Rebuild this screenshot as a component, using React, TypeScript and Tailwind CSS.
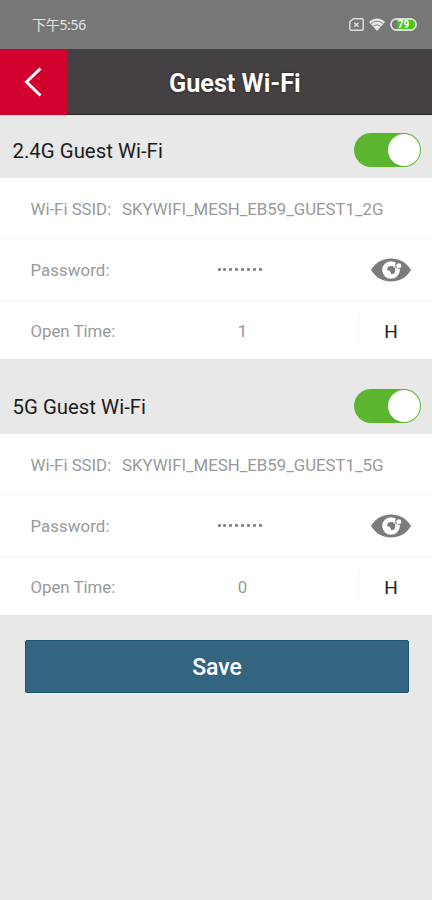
import React from "react";

function EyeIcon() {
  return (
    <svg width="40" height="24" viewBox="0 0 40 24" className="block">
      <path d="M0 12C5 4 12 .5 20 .5S35 4 40 12C35 20 28 23.500 20 23.500S5 20 0 12Z" fill="#7b7b7b" />
      <circle cx="20" cy="12" r="8.800" fill="#fff" />
      <path d="M16 12.200a4.100 4.100 0 1 1 4.100 4.100c0-2.300-1.200-4.100-4.100-4.100Z" fill="#7b7b7b" />
      <circle cx="27.500" cy="7.500" r="3.300" fill="#7b7b7b" />
      <circle cx="27.800" cy="7.700" r="2.500" fill="#fff" />
    </svg>
  );
}

function StatusBar() {
  return (
    <div className="flex h-[49px] items-center justify-between bg-[#777777] pl-8 pr-[15px] text-[#e4e4e4]">
      <span className="text-[14px] leading-none tracking-[-0.3px] [font-family:'Noto_Sans','Noto_Sans_CJK_SC',sans-serif]">下午5:56</span>
      <div className="flex items-center gap-[5px]">
        <svg width="15" height="13" viewBox="0 0 15 13" fill="none" stroke="#dedede" strokeWidth="1.500">
          <path d="M4.300.8h8.500a1.400 1.400 0 0 1 1.400 1.400v8.600a1.400 1.400 0 0 1-1.400 1.400H2.200a1.400 1.400 0 0 1-1.400-1.400V4Z" />
          <path d="m5.300 4.700 4.200 4M9.500 4.700l-4.200 4" />
        </svg>
        <svg width="16" height="13" viewBox="0 0 16 13">
          <path d="M0 4C4.500-.8 11.500-.8 16 4L8 13Z" fill="#e8e8e8" />
          <path d="M1.800 5.900c3.600-3.500 8.800-3.500 12.400 0M4.200 8.500c2.300-2.100 5.300-2.100 7.600 0" fill="none" stroke="#777" strokeWidth=".9" />
        </svg>
        <div className="flex h-[13px] w-[27px] items-center justify-center rounded-full border-2 border-[#dcdcdc]">
          <span className="flex h-full w-full items-center justify-center rounded-full bg-[linear-gradient(90deg,#777_0_20%,#46c918_20%)] text-[10px] font-bold leading-none text-white [font-family:Roboto,sans-serif]">79</span>
        </div>
      </div>
    </div>
  );
}

function Header() {
  return (
    <header className="flex h-[66px] items-center border-b border-[#252223] bg-[#454041]">
      <button className="flex h-[66px] w-[67px] items-center justify-center self-start bg-[#d2002c]">
        <svg width="19" height="30" viewBox="0 0 19 30" fill="none" stroke="#fff" strokeWidth="3">
          <path d="M16.500 1.500 2.500 15l14 13.500" />
        </svg>
      </button>
      <h1 className="ml-[102px] whitespace-nowrap pt-[4px] text-[25.200px] font-bold leading-none text-white [text-shadow:0_0_2px_#151313]">Guest Wi-Fi</h1>
    </header>
  );
}

function Section({ name, ssid, hours, first }: { name: string; ssid: string; hours: string; first?: boolean }) {
  return (
    <section>
      <div className={first ? "flex h-[63px] items-end justify-between pb-[11px] pl-[12.500px] pr-[11px]" : "flex h-[75px] items-end justify-between pb-[11px] pl-[12.500px] pr-[11px]"}>
        <h2 className="text-[20.400px] leading-[32px] text-[#1c1c1c]">{name}</h2>
        <div className="flex h-[34px] w-[67px] items-center justify-end rounded-full bg-[#5cb531] pr-px">
          <span className="h-8 w-8 rounded-full bg-white" />
        </div>
      </div>
      <div className="h-[181px] bg-white text-[16.800px] text-[#999]">
        <div className="flex h-[61px] items-center border-b border-[#f5f5f5] pl-[30.500px] pt-[4px]">
          <span className="w-[91.500px] whitespace-nowrap">Wi-Fi SSID:</span>
          <span className="whitespace-nowrap">{ssid}</span>
        </div>
        <div className="flex h-[62px] items-center border-b border-[#f5f5f5] pl-[30.500px] pr-[21px]">
          <span className="w-[187px] pt-[2px] tracking-[0.1px]">Password:</span>
          <span className="flex gap-[2.900px]">
            {Array.from({ length: 8 }, (_, i) => <i key={i} className="h-[3px] w-[3px] rounded-[1px] bg-[#858585]" />)}
          </span>
          <span className="ml-auto"><EyeIcon /></span>
        </div>
        <div className="flex h-[58px] items-center pl-[30.500px]">
          <span className="w-[187px] pt-[4px]">Open Time:</span>
          <span className="w-[50px] pt-[4px] text-center">{hours}</span>
          <span className="ml-auto flex h-[32px] w-[73px] items-center justify-center border-l border-[#fafafa] pr-[10px] pt-[4px] text-[19px] text-[#222]">H</span>
        </div>
      </div>
    </section>
  );
}

export default function App() {
  return (
    <main className="h-[900px] w-[432px] overflow-hidden bg-[#e8e8e8] [font-family:Roboto,sans-serif]">
      <StatusBar />
      <Header />
      <Section first name="2.4G Guest Wi-Fi" ssid="SKYWIFI_MESH_EB59_GUEST1_2G" hours="1" />
      <Section name="5G Guest Wi-Fi" ssid="SKYWIFI_MESH_EB59_GUEST1_5G" hours="0" />
      <div className="pl-[25px] pr-[23px] pt-[25px]">
        <button className="flex h-[53px] w-full items-center justify-center rounded-[2px] border border-[#17566f] bg-[#336580] pt-[2px] text-[23px] font-medium leading-none text-white">Save</button>
      </div>
    </main>
  );
}
